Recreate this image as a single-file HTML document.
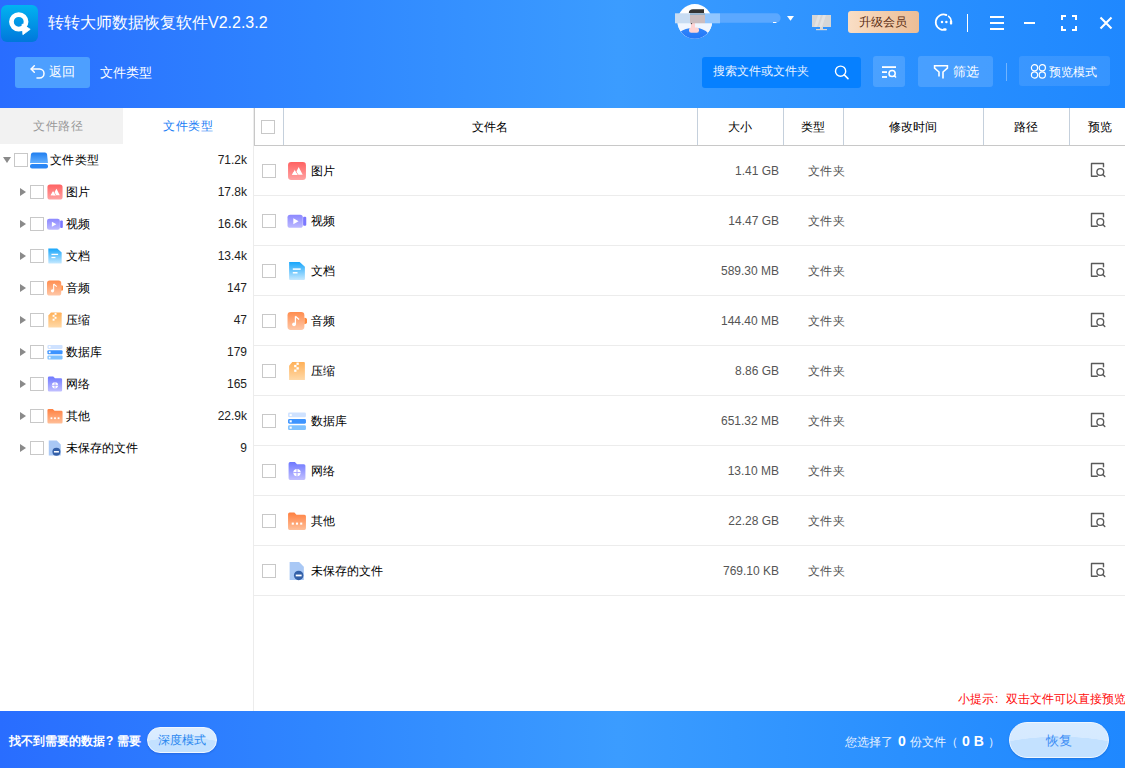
<!DOCTYPE html>
<html><head><meta charset="utf-8">
<style>
*{margin:0;padding:0;box-sizing:border-box}
html,body{width:1125px;height:768px;overflow:hidden;background:#fff;font-family:"Liberation Sans",sans-serif;color:#222}
.a{position:absolute}
.t{position:absolute;white-space:nowrap;line-height:20px}
#hdr{left:0;top:0;width:1125px;height:108px;background:linear-gradient(90deg,#296dff 0%,#2f86ff 28%,#3b9cff 55%,#2a90ff 80%,#1f88ff 100%)}
#ftr{left:0;top:711px;width:1125px;height:57px;background:linear-gradient(90deg,#296dff 0%,#2f86ff 28%,#3b9cff 55%,#2a90ff 80%,#1f88ff 100%)}
.btn{position:absolute;border-radius:3px;background:rgba(255,255,255,0.16)}
.cb{position:absolute;width:14px;height:14px;border:1px solid #c8c8c8;background:#fff}
.tri{position:absolute;width:0;height:0;border-top:4.5px solid transparent;border-bottom:4.5px solid transparent;border-left:6px solid #8a8a8a}
.vl{position:absolute;width:1px}
.hl{position:absolute;height:1px}
</style></head><body>
<div id="hdr" class="a"></div>
<div id="ftr" class="a"></div>

<!-- logo -->
<div class="a" style="left:1px;top:5px;width:37px;height:37px;border-radius:6px;background:linear-gradient(180deg,#02b3f1,#0077db)"></div>
<svg class="a" style="left:1px;top:5px" width="37" height="37" viewBox="0 0 37 37">
  <circle cx="17.75" cy="16.85" r="7.3" fill="none" stroke="#fff" stroke-width="4.75"/>
  <path d="M21.1 19 L29.2 24.3 L21.9 29.7 Z" fill="#fff" stroke="#fff" stroke-width="0.8" stroke-linejoin="round"/>
</svg>
<div class="t" style="left:48px;top:13px;font-size:16px;color:#fff">转转大师数据恢复软件V2.2.3.2</div>

<!-- back button row -->
<div class="btn" style="left:14.5px;top:56.5px;width:75px;height:31px;background:#4d9fff"></div>
<svg class="a" style="left:30px;top:64px" width="16" height="16" viewBox="0 0 16 16">
  <path d="M4.3 1.8 L1.1 5 L4.3 8.2" fill="none" stroke="#fff" stroke-width="1.5" stroke-linecap="round" stroke-linejoin="round"/>
  <path d="M1.3 5 H9.5 A4.5 4.5 0 0 1 9.5 14 H7" fill="none" stroke="#fff" stroke-width="1.5" stroke-linecap="round"/>
</svg>
<div class="t" style="left:49px;top:62px;font-size:13px;color:#fff">返回</div>
<div class="t" style="left:100px;top:63px;font-size:13px;color:#fff">文件类型</div>

<!-- avatar -->
<svg class="a" style="left:670px;top:0px" width="130" height="45" viewBox="0 0 130 45">
  <defs><clipPath id="avc"><circle cx="24.8" cy="21.4" r="17.3"/></clipPath>
  <linearGradient id="bodyg" x1="0" y1="0" x2="0" y2="1"><stop offset="0" stop-color="#2f86fb"/><stop offset="1" stop-color="#1e6ef5"/></linearGradient></defs>
  <g clip-path="url(#avc)">
    <rect x="0" y="0" width="50" height="45" fill="#fff"/>
    <rect x="0" y="23" width="50" height="14" fill="#f0f6ff"/>
    <path d="M18.8 12.9 Q19 9.5 23 9.3 H34 V12.9 Z" fill="#333"/>
    <path d="M10 32 Q16 27.5 24.5 28 Q33 27.5 38.5 33.5 L44 45 L5 45 Z" fill="url(#bodyg)"/>
    <rect x="21" y="22" width="4" height="8" fill="#ffd3d3"/>
    <rect x="19" y="27.5" width="10" height="5.2" rx="2.2" fill="#ffd3d3"/>
    <circle cx="21.5" cy="23.5" r="0.7" fill="#222"/>
  </g>
  <rect x="5" y="13.3" width="15" height="10" fill="#c8dcf2"/>
  <rect x="20" y="13.3" width="15" height="10" fill="#cbbdc0"/>
  <rect x="20" y="13.3" width="15" height="1.5" fill="#86aecf"/>
  <rect x="35" y="13.3" width="15" height="10" fill="#91c6ff"/>
  <path d="M50 13.3 H106 A4.7 4.7 0 0 1 106 22.7 H50 Z" fill="#5ba8ff"/>
  <rect x="103" y="22" width="3.4" height="1" fill="#fff"/>
  <path d="M117 16.1 H124 L120.5 20.8 Z" fill="#fff"/>
</svg>
<!-- monitor -->
<svg class="a" style="left:810px;top:13px" width="24" height="20" viewBox="0 0 24 20">
  <rect x="2" y="2" width="19" height="12" fill="#d6d6d6"/>
  <path d="M8 2 L4 14 H7 L11 2 Z M13 2 L9 14 H12 L16 2 Z" fill="#e2e2e2"/>
  <rect x="10" y="14" width="3" height="2" fill="#d6d6d6"/>
  <rect x="6" y="16" width="11" height="1.2" fill="#d6d6d6"/>
</svg>
<!-- vip badge -->
<div class="a" style="left:848px;top:11px;width:71px;height:22px;border-radius:3px;background:linear-gradient(90deg,#f9dec5,#ecbd96)"></div>
<div class="t" style="left:859px;top:12px;font-size:12px;color:#5a2c12">升级会员</div>
<!-- headset -->
<svg class="a" style="left:932px;top:12px" width="24" height="22" viewBox="0 0 24 22">
  <path d="M14.3 2.9 A7.8 7.8 0 1 0 11.6 18" fill="none" stroke="#fff" stroke-width="1.7"/>
  <path d="M16.2 3.9 A7.8 7.8 0 0 1 19.3 9.5" fill="none" stroke="#fff" stroke-width="1.7"/>
  <circle cx="14.3" cy="2.9" r="1" fill="#fff"/>
  <rect x="17.9" y="8.6" width="2.3" height="4" rx="0.8" fill="#fff"/>
  <rect x="11" y="16.2" width="3.6" height="2.6" rx="1.1" fill="#fff"/>
  <circle cx="10" cy="10" r="1.25" fill="#fff"/>
  <circle cx="14.4" cy="10" r="1.25" fill="#fff"/>
</svg>
<div class="a" style="left:967px;top:14px;width:1.4px;height:18px;background:#fff"></div>
<!-- menu -->
<svg class="a" style="left:985px;top:10px" width="24" height="24" viewBox="0 0 24 24">
  <rect x="5" y="6" width="14" height="2" fill="#fff"/>
  <rect x="5" y="12" width="14" height="2" fill="#fff"/>
  <rect x="5" y="18" width="14" height="2" fill="#fff"/>
</svg>
<div class="a" style="left:1024px;top:22px;width:11px;height:2px;background:#fff"></div>
<svg class="a" style="left:1058px;top:12px" width="22" height="22" viewBox="0 0 22 22">
  <path d="M4 8 V4 H8 M14 4 H18 V8 M18 14 V18 H14 M8 18 H4 V14" fill="none" stroke="#fff" stroke-width="2"/>
</svg>
<svg class="a" style="left:1096px;top:13px" width="20" height="20" viewBox="0 0 20 20">
  <path d="M4.5 4.5 L15.5 15.5 M15.5 4.5 L4.5 15.5" stroke="#fff" stroke-width="2.1"/>
</svg>

<!-- toolbar right -->
<div class="a" style="left:701.5px;top:56.5px;width:159px;height:31px;border-radius:3px;background:#0680ff"></div>
<div class="t" style="left:713px;top:61px;font-size:12px;color:#e6f1ff">搜索文件或文件夹</div>
<svg class="a" style="left:832px;top:63px" width="20" height="20" viewBox="0 0 20 20">
  <circle cx="8.6" cy="8.2" r="5.1" fill="none" stroke="#fff" stroke-width="1.4"/>
  <path d="M12.3 11.9 L16 15.6" stroke="#fff" stroke-width="1.5" stroke-linecap="round"/>
</svg>
<div class="btn" style="left:873px;top:56px;width:32px;height:31px;background:rgba(255,255,255,0.15)"></div>
<svg class="a" style="left:879px;top:62px" width="20" height="20" viewBox="0 0 20 20">
  <rect x="3" y="4.2" width="14" height="1.8" fill="#fff"/>
  <rect x="3" y="9.2" width="5" height="1.8" fill="#fff"/>
  <rect x="3" y="14.1" width="5" height="1.8" fill="#fff"/>
  <circle cx="13.1" cy="11.5" r="3.1" fill="none" stroke="#fff" stroke-width="1.5"/>
  <path d="M15.3 13.7 L16.6 15" stroke="#fff" stroke-width="1.5" stroke-linecap="round"/>
</svg>
<div class="btn" style="left:918px;top:56px;width:75px;height:31px;background:rgba(255,255,255,0.15)"></div>
<svg class="a" style="left:932px;top:62px" width="18" height="18" viewBox="0 0 18 18">
  <path d="M7 14.5 V10 L2.6 6.2 V3.8 H15.4 V6.2 L11 10 V16.6" fill="none" stroke="#fff" stroke-width="1.6" stroke-linejoin="miter"/>
</svg>
<div class="t" style="left:953px;top:62px;font-size:12.5px;color:#fff">筛选</div>
<div class="a" style="left:1006px;top:63px;width:1px;height:18px;background:rgba(255,255,255,0.35)"></div>
<div class="btn" style="left:1019px;top:56px;width:91px;height:30px;background:rgba(255,255,255,0.1)"></div>
<svg class="a" style="left:1029px;top:62px" width="18" height="18" viewBox="0 0 18 18">
  <circle cx="5.5" cy="5.8" r="3.1" fill="none" stroke="#fff" stroke-width="1.2"/>
  <circle cx="13.3" cy="5.8" r="3.1" fill="none" stroke="#fff" stroke-width="1.2"/>
  <circle cx="5.5" cy="13" r="3.1" fill="none" stroke="#fff" stroke-width="1.2"/>
  <circle cx="13.3" cy="13" r="3.1" fill="none" stroke="#fff" stroke-width="1.2"/>
</svg>
<div class="t" style="left:1049px;top:62px;font-size:12px;color:#fff">预览模式</div>

<svg width="0" height="0" style="position:absolute"><defs>
<linearGradient id="g_img" x1="0" y1="0" x2="0" y2="1"><stop offset="0" stop-color="#ff6262"/><stop offset="1" stop-color="#ffa3a3"/></linearGradient>
<linearGradient id="g_vid" x1="0" y1="0" x2="0" y2="1"><stop offset="0" stop-color="#8c88ff"/><stop offset="1" stop-color="#bdbaff"/></linearGradient>
<linearGradient id="g_doc" x1="0" y1="0" x2="0" y2="1"><stop offset="0" stop-color="#18a6fb"/><stop offset="1" stop-color="#c6e9ff"/></linearGradient>
<linearGradient id="g_aud" x1="0" y1="0" x2="0" y2="1"><stop offset="0" stop-color="#ff8d4f"/><stop offset="1" stop-color="#ffc8a8"/></linearGradient>
<linearGradient id="g_zip" x1="0" y1="0" x2="0" y2="1"><stop offset="0" stop-color="#ffb057"/><stop offset="1" stop-color="#ffd9a8"/></linearGradient>
<linearGradient id="g_net" x1="0" y1="0" x2="0" y2="1"><stop offset="0" stop-color="#6e78ff"/><stop offset="1" stop-color="#c2c0ff"/></linearGradient>
<linearGradient id="g_oth" x1="0" y1="0" x2="0" y2="1"><stop offset="0" stop-color="#ff8040"/><stop offset="1" stop-color="#ffbf99"/></linearGradient>
<linearGradient id="g_drv" x1="0" y1="0" x2="0" y2="1"><stop offset="0" stop-color="#1f7ef0"/><stop offset="1" stop-color="#64b0ff"/></linearGradient>
<g id="i_img"><rect x="0.5" y="0.5" width="17" height="17" rx="3" fill="url(#g_img)"/><path d="M6.8 12.6 L10.4 5.6 Q10.6 5.3 10.8 5.6 L14.4 12.6 Z" fill="#fff"/><path d="M3.8 12.6 L6.8 7.6 L9.9 12.6" fill="#fff" stroke="#ff8080" stroke-width="0.8"/><path d="M4.2 12.6 L6.8 8.2 L9.4 12.6 Z" fill="#fff"/></g>
<g id="i_vid"><rect x="0" y="3" width="14.5" height="12.5" rx="2.5" fill="url(#g_vid)"/><rect x="14.8" y="5" width="3" height="8.5" rx="1" fill="#7b78ff"/><path d="M5.5 6.5 L10.5 9.3 L5.5 12 Z" fill="#fff"/></g>
<g id="i_doc"><path d="M1.5 0.5 H11.5 L16.5 5 V16.5 Q16.5 17.5 15.5 17.5 H2.5 Q1.5 17.5 1.5 16.5 Z" fill="url(#g_doc)"/><rect x="5" y="6.5" width="7.5" height="1.4" fill="#fff"/><rect x="5" y="10" width="4.5" height="1.4" fill="#fff"/></g>
<g id="i_aud"><rect x="0" y="0.5" width="16" height="17" rx="3" fill="url(#g_aud)"/><path d="M16 6 A3 3 0 0 1 16 12 Z" fill="#ff8a3d"/><path d="M7.5 4.5 V12 M7.5 4.5 L11 7.5" fill="none" stroke="#fff" stroke-width="1.2"/><circle cx="6.2" cy="12.2" r="1.8" fill="#fff"/></g>
<g id="i_zip"><path d="M4.5 0.5 H15.5 Q16.5 0.5 16.5 1.5 V17.5 H1.5 V4 Z" fill="url(#g_zip)"/><rect x="8.5" y="1" width="2.2" height="2.2" fill="#fff"/><rect x="6.3" y="3.2" width="2.2" height="2.2" fill="#fff"/><rect x="8.5" y="5.4" width="2.2" height="2.2" fill="#fff"/><rect x="6.3" y="7.6" width="2.2" height="2.2" fill="#fff"/></g>
<g id="i_db"><rect x="0.5" y="1" width="17" height="4.5" rx="1.2" fill="#cfe2ff"/><rect x="0.5" y="7" width="17" height="4.5" rx="1.2" fill="#3d94ff"/><rect x="0.5" y="13" width="17" height="4.5" rx="1.2" fill="#7ec1ff"/><rect x="2" y="2.3" width="2" height="2" fill="#fff"/><rect x="2" y="8.3" width="2" height="2" fill="#fff"/><rect x="2" y="14.3" width="2" height="2" fill="#fff"/></g>
<g id="i_net"><path d="M1 2 Q1 0.5 2.5 0.5 H7 L9 2.5 H15.5 Q17 2.5 17 4 V16 Q17 17.5 15.5 17.5 H2.5 Q1 17.5 1 16 Z" fill="url(#g_net)"/><circle cx="9" cy="10.5" r="3.5" fill="#fff"/><path d="M5.5 10.5 H12.5 M9 7 V14" stroke="#a5a0ff" stroke-width="0.9"/></g>
<g id="i_oth"><path d="M0.5 2.5 Q0.5 1 2 1 H6.5 L8.5 3 H16 Q17.5 3 17.5 4.5 V16 Q17.5 17.5 16 17.5 H2 Q0.5 17.5 0.5 16 Z" fill="url(#g_oth)"/><rect x="4" y="10.5" width="2" height="2" fill="#fff"/><rect x="8" y="10.5" width="2" height="2" fill="#fff"/><rect x="12" y="10.5" width="2" height="2" fill="#fff"/></g>
<g id="i_uns"><path d="M2 0.5 H11 L15.5 5 V17.5 H2 Z" fill="#a9c8f5"/><circle cx="10.6" cy="13.2" r="4.5" fill="#3460a8"/><rect x="7.8" y="12.4" width="5.6" height="1.7" fill="#fff"/></g>
<g id="i_drv"><path d="M3 0.5 H15 Q16.5 0.5 17 2 L18 11 H0 L1 2 Q1.5 0.5 3 0.5 Z" fill="url(#g_drv)"/><rect x="0" y="12" width="18" height="4.5" rx="2" fill="#2a86f5"/></g>
<g id="i_prev"><path d="M9.8 15.3 H3.5 V2.5 H15.5 V6.2" fill="none" stroke="#5a5a5a" stroke-width="1.4" stroke-linejoin="round"/><circle cx="12.3" cy="11" r="3.4" fill="none" stroke="#5a5a5a" stroke-width="1.4"/><path d="M14.8 13.5 L16.8 15.5" stroke="#5a5a5a" stroke-width="1.4" stroke-linecap="round"/></g>
</defs></svg>

<!-- left panel -->
<div class="a" style="left:0;top:108px;width:123px;height:36px;background:#f2f2f2"></div>
<div class="t" style="left:33px;top:116px;font-size:12px;letter-spacing:0.6px;color:#999">文件路径</div>
<div class="t" style="left:163px;top:116px;font-size:12px;letter-spacing:0.6px;color:#1a7ef5">文件类型</div>
<div class="vl" style="left:253px;top:108px;height:603px;background:#ececec"></div>
<div class="a" style="left:3px;top:157px;width:0;height:0;border-left:4.5px solid transparent;border-right:4.5px solid transparent;border-top:6px solid #8a8a8a"></div>
<div class="cb" style="left:14px;top:153px"></div>
<svg class="a" style="left:30px;top:152px" width="18" height="17" viewBox="0 0 18 17"><use href="#i_drv"/></svg>
<div class="t" style="left:50px;top:150px;font-size:12px;letter-spacing:0.4px;color:#000">文件类型</div>
<div class="t" style="left:147px;width:100px;text-align:right;top:150px;font-size:12px;color:#222">71.2k</div>
<div class="tri" style="left:20px;top:187.5px"></div>
<div class="cb" style="left:30px;top:185px"></div>
<svg class="a" style="left:47px;top:184px" width="16" height="16" viewBox="0 0 18 18"><use href="#i_img"/></svg>
<div class="t" style="left:66px;top:182px;font-size:12px;color:#000">图片</div>
<div class="t" style="left:147px;width:100px;text-align:right;top:182px;font-size:12px;color:#222">17.8k</div>
<div class="tri" style="left:20px;top:219.5px"></div>
<div class="cb" style="left:30px;top:217px"></div>
<svg class="a" style="left:47px;top:216px" width="16" height="16" viewBox="0 0 18 18"><use href="#i_vid"/></svg>
<div class="t" style="left:66px;top:214px;font-size:12px;color:#000">视频</div>
<div class="t" style="left:147px;width:100px;text-align:right;top:214px;font-size:12px;color:#222">16.6k</div>
<div class="tri" style="left:20px;top:251.5px"></div>
<div class="cb" style="left:30px;top:249px"></div>
<svg class="a" style="left:47px;top:248px" width="16" height="16" viewBox="0 0 18 18"><use href="#i_doc"/></svg>
<div class="t" style="left:66px;top:246px;font-size:12px;color:#000">文档</div>
<div class="t" style="left:147px;width:100px;text-align:right;top:246px;font-size:12px;color:#222">13.4k</div>
<div class="tri" style="left:20px;top:283.5px"></div>
<div class="cb" style="left:30px;top:281px"></div>
<svg class="a" style="left:47px;top:280px" width="16" height="16" viewBox="0 0 18 18"><use href="#i_aud"/></svg>
<div class="t" style="left:66px;top:278px;font-size:12px;color:#000">音频</div>
<div class="t" style="left:147px;width:100px;text-align:right;top:278px;font-size:12px;color:#222">147</div>
<div class="tri" style="left:20px;top:315.5px"></div>
<div class="cb" style="left:30px;top:313px"></div>
<svg class="a" style="left:47px;top:312px" width="16" height="16" viewBox="0 0 18 18"><use href="#i_zip"/></svg>
<div class="t" style="left:66px;top:310px;font-size:12px;color:#000">压缩</div>
<div class="t" style="left:147px;width:100px;text-align:right;top:310px;font-size:12px;color:#222">47</div>
<div class="tri" style="left:20px;top:347.5px"></div>
<div class="cb" style="left:30px;top:345px"></div>
<svg class="a" style="left:47px;top:344px" width="16" height="16" viewBox="0 0 18 18"><use href="#i_db"/></svg>
<div class="t" style="left:66px;top:342px;font-size:12px;color:#000">数据库</div>
<div class="t" style="left:147px;width:100px;text-align:right;top:342px;font-size:12px;color:#222">179</div>
<div class="tri" style="left:20px;top:379.5px"></div>
<div class="cb" style="left:30px;top:377px"></div>
<svg class="a" style="left:47px;top:376px" width="16" height="16" viewBox="0 0 18 18"><use href="#i_net"/></svg>
<div class="t" style="left:66px;top:374px;font-size:12px;color:#000">网络</div>
<div class="t" style="left:147px;width:100px;text-align:right;top:374px;font-size:12px;color:#222">165</div>
<div class="tri" style="left:20px;top:411.5px"></div>
<div class="cb" style="left:30px;top:409px"></div>
<svg class="a" style="left:47px;top:408px" width="16" height="16" viewBox="0 0 18 18"><use href="#i_oth"/></svg>
<div class="t" style="left:66px;top:406px;font-size:12px;color:#000">其他</div>
<div class="t" style="left:147px;width:100px;text-align:right;top:406px;font-size:12px;color:#222">22.9k</div>
<div class="tri" style="left:20px;top:443.5px"></div>
<div class="cb" style="left:30px;top:441px"></div>
<svg class="a" style="left:47px;top:440px" width="16" height="16" viewBox="0 0 18 18"><use href="#i_uns"/></svg>
<div class="t" style="left:66px;top:438px;font-size:12px;color:#000">未保存的文件</div>
<div class="t" style="left:147px;width:100px;text-align:right;top:438px;font-size:12px;color:#222">9</div>

<!-- table header -->
<div class="vl" style="left:254px;top:108px;height:37px;background:#c8c8c8"></div>
<div class="hl" style="left:254px;top:145px;width:871px;background:#c8c8c8"></div>
<div class="vl" style="left:283px;top:108px;height:37px;background:#c5d0dc"></div>
<div class="vl" style="left:697px;top:108px;height:37px;background:#c5d0dc"></div>
<div class="vl" style="left:783px;top:108px;height:37px;background:#c5d0dc"></div>
<div class="vl" style="left:843px;top:108px;height:37px;background:#c5d0dc"></div>
<div class="vl" style="left:983px;top:108px;height:37px;background:#c5d0dc"></div>
<div class="vl" style="left:1069px;top:108px;height:37px;background:#c5d0dc"></div>
<div class="cb" style="left:261px;top:120px"></div>
<div class="t" style="left:283px;width:414px;text-align:center;top:117px;font-size:12px;color:#000">文件名</div>
<div class="t" style="left:697px;width:86px;text-align:center;top:117px;font-size:12px;color:#000">大小</div>
<div class="t" style="left:783px;width:60px;text-align:center;top:117px;font-size:12px;color:#000">类型</div>
<div class="t" style="left:843px;width:140px;text-align:center;top:117px;font-size:12px;color:#000">修改时间</div>
<div class="t" style="left:983px;width:86px;text-align:center;top:117px;font-size:12px;color:#000">路径</div>
<div class="t" style="left:1069px;width:62px;text-align:center;top:117px;font-size:12px;color:#000">预览</div>
<div class="cb" style="left:262px;top:164px"></div>
<svg class="a" style="left:287px;top:161px" width="20" height="20" viewBox="-0.5 -0.5 19 19"><use href="#i_img"/></svg>
<div class="t" style="left:311px;top:161px;font-size:12px;color:#000">图片</div>
<div class="t" style="left:679px;width:100px;text-align:right;top:161px;font-size:12px;color:#555">1.41 GB</div>
<div class="t" style="left:808px;letter-spacing:0.4px;top:161px;font-size:12px;color:#555">文件夹</div>
<svg class="a" style="left:1088px;top:161px" width="20" height="20" viewBox="0 0 20 20"><use href="#i_prev"/></svg>
<div class="hl" style="left:254px;top:195px;width:871px;background:#ececec"></div>
<div class="cb" style="left:262px;top:214px"></div>
<svg class="a" style="left:287px;top:211px" width="20" height="20" viewBox="-0.5 -0.5 19 19"><use href="#i_vid"/></svg>
<div class="t" style="left:311px;top:211px;font-size:12px;color:#000">视频</div>
<div class="t" style="left:679px;width:100px;text-align:right;top:211px;font-size:12px;color:#555">14.47 GB</div>
<div class="t" style="left:808px;letter-spacing:0.4px;top:211px;font-size:12px;color:#555">文件夹</div>
<svg class="a" style="left:1088px;top:211px" width="20" height="20" viewBox="0 0 20 20"><use href="#i_prev"/></svg>
<div class="hl" style="left:254px;top:245px;width:871px;background:#ececec"></div>
<div class="cb" style="left:262px;top:264px"></div>
<svg class="a" style="left:287px;top:261px" width="20" height="20" viewBox="-0.5 -0.5 19 19"><use href="#i_doc"/></svg>
<div class="t" style="left:311px;top:261px;font-size:12px;color:#000">文档</div>
<div class="t" style="left:679px;width:100px;text-align:right;top:261px;font-size:12px;color:#555">589.30 MB</div>
<div class="t" style="left:808px;letter-spacing:0.4px;top:261px;font-size:12px;color:#555">文件夹</div>
<svg class="a" style="left:1088px;top:261px" width="20" height="20" viewBox="0 0 20 20"><use href="#i_prev"/></svg>
<div class="hl" style="left:254px;top:295px;width:871px;background:#ececec"></div>
<div class="cb" style="left:262px;top:314px"></div>
<svg class="a" style="left:287px;top:311px" width="20" height="20" viewBox="-0.5 -0.5 19 19"><use href="#i_aud"/></svg>
<div class="t" style="left:311px;top:311px;font-size:12px;color:#000">音频</div>
<div class="t" style="left:679px;width:100px;text-align:right;top:311px;font-size:12px;color:#555">144.40 MB</div>
<div class="t" style="left:808px;letter-spacing:0.4px;top:311px;font-size:12px;color:#555">文件夹</div>
<svg class="a" style="left:1088px;top:311px" width="20" height="20" viewBox="0 0 20 20"><use href="#i_prev"/></svg>
<div class="hl" style="left:254px;top:345px;width:871px;background:#ececec"></div>
<div class="cb" style="left:262px;top:364px"></div>
<svg class="a" style="left:287px;top:361px" width="20" height="20" viewBox="-0.5 -0.5 19 19"><use href="#i_zip"/></svg>
<div class="t" style="left:311px;top:361px;font-size:12px;color:#000">压缩</div>
<div class="t" style="left:679px;width:100px;text-align:right;top:361px;font-size:12px;color:#555">8.86 GB</div>
<div class="t" style="left:808px;letter-spacing:0.4px;top:361px;font-size:12px;color:#555">文件夹</div>
<svg class="a" style="left:1088px;top:361px" width="20" height="20" viewBox="0 0 20 20"><use href="#i_prev"/></svg>
<div class="hl" style="left:254px;top:395px;width:871px;background:#ececec"></div>
<div class="cb" style="left:262px;top:414px"></div>
<svg class="a" style="left:287px;top:411px" width="20" height="20" viewBox="-0.5 -0.5 19 19"><use href="#i_db"/></svg>
<div class="t" style="left:311px;top:411px;font-size:12px;color:#000">数据库</div>
<div class="t" style="left:679px;width:100px;text-align:right;top:411px;font-size:12px;color:#555">651.32 MB</div>
<div class="t" style="left:808px;letter-spacing:0.4px;top:411px;font-size:12px;color:#555">文件夹</div>
<svg class="a" style="left:1088px;top:411px" width="20" height="20" viewBox="0 0 20 20"><use href="#i_prev"/></svg>
<div class="hl" style="left:254px;top:445px;width:871px;background:#ececec"></div>
<div class="cb" style="left:262px;top:464px"></div>
<svg class="a" style="left:287px;top:461px" width="20" height="20" viewBox="-0.5 -0.5 19 19"><use href="#i_net"/></svg>
<div class="t" style="left:311px;top:461px;font-size:12px;color:#000">网络</div>
<div class="t" style="left:679px;width:100px;text-align:right;top:461px;font-size:12px;color:#555">13.10 MB</div>
<div class="t" style="left:808px;letter-spacing:0.4px;top:461px;font-size:12px;color:#555">文件夹</div>
<svg class="a" style="left:1088px;top:461px" width="20" height="20" viewBox="0 0 20 20"><use href="#i_prev"/></svg>
<div class="hl" style="left:254px;top:495px;width:871px;background:#ececec"></div>
<div class="cb" style="left:262px;top:514px"></div>
<svg class="a" style="left:287px;top:511px" width="20" height="20" viewBox="-0.5 -0.5 19 19"><use href="#i_oth"/></svg>
<div class="t" style="left:311px;top:511px;font-size:12px;color:#000">其他</div>
<div class="t" style="left:679px;width:100px;text-align:right;top:511px;font-size:12px;color:#555">22.28 GB</div>
<div class="t" style="left:808px;letter-spacing:0.4px;top:511px;font-size:12px;color:#555">文件夹</div>
<svg class="a" style="left:1088px;top:511px" width="20" height="20" viewBox="0 0 20 20"><use href="#i_prev"/></svg>
<div class="hl" style="left:254px;top:545px;width:871px;background:#ececec"></div>
<div class="cb" style="left:262px;top:564px"></div>
<svg class="a" style="left:287px;top:561px" width="20" height="20" viewBox="-0.5 -0.5 19 19"><use href="#i_uns"/></svg>
<div class="t" style="left:311px;top:561px;font-size:12px;color:#000">未保存的文件</div>
<div class="t" style="left:679px;width:100px;text-align:right;top:561px;font-size:12px;color:#555">769.10 KB</div>
<div class="t" style="left:808px;letter-spacing:0.4px;top:561px;font-size:12px;color:#555">文件夹</div>
<svg class="a" style="left:1088px;top:561px" width="20" height="20" viewBox="0 0 20 20"><use href="#i_prev"/></svg>
<div class="hl" style="left:254px;top:595px;width:871px;background:#ececec"></div>

<div class="t" style="left:958px;top:689px;font-size:12px;color:#ff0a0a">小提示<span style="display:inline-block;width:12px;padding-left:1px">:</span>双击文件可以直接预览</div>

<!-- footer -->
<div class="t" style="left:9px;top:731px;font-size:12px;color:#fff;font-weight:bold">找不到需要的数据<span style="display:inline-block;width:12px;padding-left:1px">?</span>需要</div>
<div class="a" style="left:147px;top:727px;width:70px;height:26px;border-radius:13px;border:1.5px solid #f0f7ff;background:radial-gradient(ellipse 80% 60% at 50% 100%,#c3e1ff 98%,rgba(195,225,255,0) 100%),linear-gradient(180deg,#dcedff,#d3e8ff);box-shadow:0 1px 2px rgba(0,40,120,0.2)"></div>
<div class="t" style="left:158px;top:730px;font-size:12px;color:#2a88f0">深度模式</div>
<div class="t" style="left:845px;top:732px;font-size:12px;color:#e8f1ff">您选择了</div>
<div class="t" style="left:898px;top:731px;font-size:14px;color:#fff;font-weight:bold">0</div>
<div class="t" style="left:910px;top:732px;font-size:12px;color:#e8f1ff">份文件（</div>
<div class="t" style="left:962px;top:731px;font-size:14px;color:#fff;font-weight:bold">0 B</div>
<div class="t" style="left:988px;top:732px;font-size:12px;color:#e8f1ff">）</div>
<div class="a" style="left:1009px;top:722px;width:100px;height:36px;border-radius:18px;border:1.5px solid #eef6ff;background:radial-gradient(ellipse 80% 60% at 50% 100%,#c3e1ff 98%,rgba(195,225,255,0) 100%),linear-gradient(180deg,#d8ebff,#d3e8ff);box-shadow:0 1px 2px rgba(0,40,120,0.2)"></div>
<div class="t" style="left:1046px;top:731px;font-size:13px;color:#3d8ef5">恢复</div>
</body></html>
